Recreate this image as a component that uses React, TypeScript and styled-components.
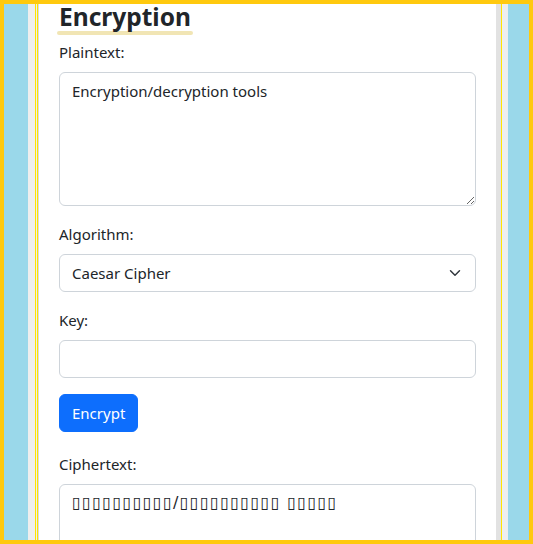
import styled, { createGlobalStyle } from 'styled-components'

const GlobalStyle = createGlobalStyle`
  html, body {
    margin: 0;
    padding: 0;
  }
  body {
    font-family: "Noto Sans", "Liberation Sans", sans-serif;
    color: #212529;
  }
  * {
    box-sizing: border-box;
  }
`

const Frame = styled.div`
  height: 100vh;
  border: 4px solid #ffc90e;
  background: #9ad8ea;
  padding: 0 21px 0 24px;
  display: flex;
  overflow: hidden;
`

const Column = styled.div`
  flex: 1;
  display: flex;
  background: #eeeeee;
  padding: 0 6px 0 7px;
`

const Rail = styled.div`
  flex: 1;
  display: flex;
  border-left: 3px double #ffe500;
  border-right: 1px solid #ffe500;
`

const Card = styled.main`
  flex: 1;
  background: #ffffff;
  border-left: 1px solid #dcdcdc;
  border-right: 5px solid #e2e2e2;
  padding: 0 20px;
  display: flex;
  flex-direction: column;
`

const Title = styled.h2`
  margin: 0;
  align-self: flex-start;
  font-size: 24.5px;
  font-weight: 700;
  line-height: 26px;
  color: #212529;

  &::after {
    content: '';
    display: block;
    height: 4px;
    margin: 1px -2px 0;
    border-radius: 2px;
    background: #f1e5b4;
  }
`

const Field = styled.div<{ $gap?: number }>`
  display: flex;
  flex-direction: column;
  margin-top: ${({ $gap }) => $gap ?? 16}px;
`

const Label = styled.label`
  font-size: 15px;
  line-height: 24px;
  margin-bottom: 8px;
`

const TextArea = styled.textarea<{ $boxes?: boolean }>`
  height: 134px;
  width: 100%;
  padding: 6px 12px;
  border: 1px solid #ced4da;
  border-radius: 6px;
  font-family: ${({ $boxes }) => ($boxes ? '"DejaVu Sans", sans-serif' : 'inherit')};
  font-size: ${({ $boxes }) => ($boxes ? 16 : 15)}px;
  letter-spacing: ${({ $boxes }) => ($boxes ? 1.3 : 0)}px;
  line-height: 24px;
  color: #212529;
  resize: vertical;
  outline: none;
`

const Select = styled.select`
  height: 38px;
  width: 100%;
  padding: 6px 36px 6px 12px;
  border: 1px solid #ced4da;
  border-radius: 6px;
  font-family: inherit;
  font-size: 15px;
  line-height: 24px;
  color: #212529;
  appearance: none;
  background-color: #ffffff;
  background-image: url("data:image/svg+xml,%3csvg xmlns='http://www.w3.org/2000/svg' viewBox='0 0 16 16'%3e%3cpath fill='none' stroke='%23343a40' stroke-linecap='round' stroke-linejoin='round' stroke-width='2' d='m2 5 6 6 6-6'/%3e%3c/svg%3e");
  background-repeat: no-repeat;
  background-position: right 12px center;
  background-size: 16px 12px;
  outline: none;
`

const Input = styled.input`
  height: 38px;
  width: 100%;
  padding: 6px 12px;
  border: 1px solid #ced4da;
  border-radius: 6px;
  font-family: inherit;
  font-size: 15px;
  outline: none;
`

const Button = styled.button`
  align-self: flex-start;
  margin-top: 16px;
  height: 38px;
  padding: 6px 12px;
  border: 1px solid #0d6efd;
  border-radius: 6px;
  background: #0d6efd;
  color: #ffffff;
  font-family: inherit;
  font-size: 15px;
  line-height: 24px;
  cursor: pointer;
`

const cipher = '▯▯▯▯▯▯▯▯▯▯/▯▯▯▯▯▯▯▯▯▯ ▯▯▯▯▯'

export default function App() {
  return (
    <>
      <GlobalStyle />
      <Frame>
        <Column>
          <Rail>
            <Card>
              <Title>Encryption</Title>
              <Field $gap={5}>
                <Label htmlFor="plain">Plaintext:</Label>
                <TextArea id="plain" defaultValue="Encryption/decryption tools" />
              </Field>
              <Field>
                <Label htmlFor="algo">Algorithm:</Label>
                <Select id="algo" defaultValue="caesar">
                  <option value="caesar">Caesar Cipher</option>
                  <option value="vigenere">Vigenère Cipher</option>
                  <option value="base64">Base64</option>
                </Select>
              </Field>
              <Field>
                <Label htmlFor="key">Key:</Label>
                <Input id="key" type="text" />
              </Field>
              <Button type="button">Encrypt</Button>
              <Field $gap={20}>
                <Label htmlFor="cipher">Ciphertext:</Label>
                <TextArea id="cipher" $boxes readOnly value={cipher} />
              </Field>
            </Card>
          </Rail>
        </Column>
      </Frame>
    </>
  )
}
